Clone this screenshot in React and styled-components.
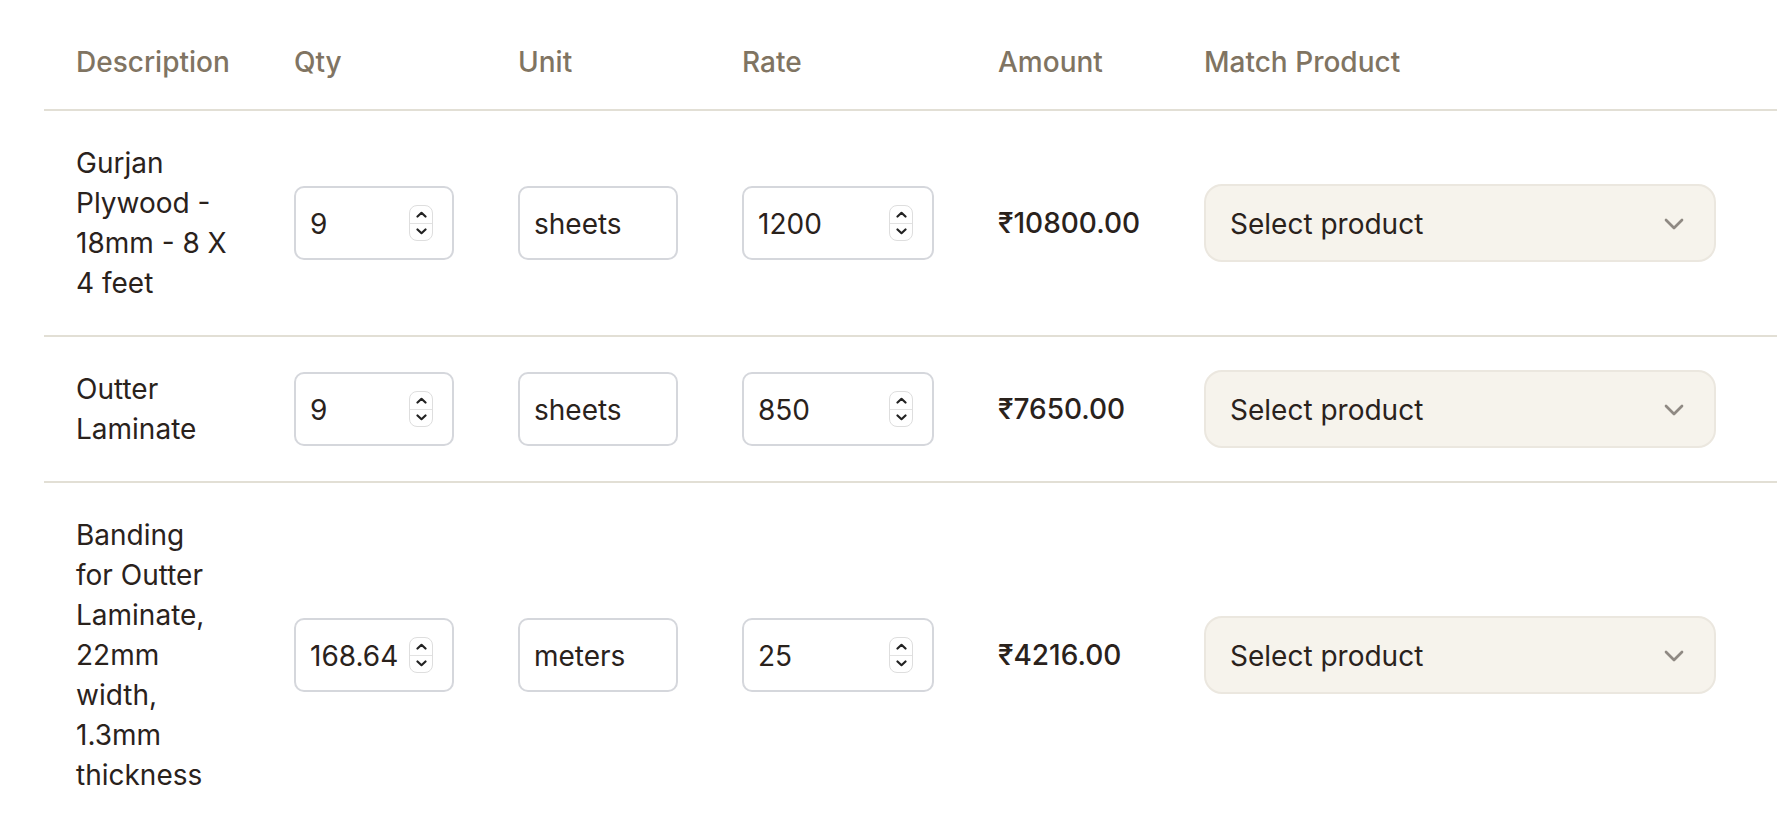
import React from "react";
import styled, { createGlobalStyle } from "styled-components";
import { ChevronDown } from "lucide-react";

const Global = createGlobalStyle`
  html, body { margin: 0; padding: 0; background: #ffffff; }
  body { font-family: Inter, "Noto Sans", sans-serif; color: #2a221c; }
  * { box-sizing: border-box; }
`;

const Page = styled.div`
  padding: 14px 7px 0 44px;
`;

const Table = styled.table`
  width: 1733px;
  border-collapse: collapse;
  table-layout: fixed;
  font-size: 28px;
  line-height: 40px;
`;

const HeadRow = styled.tr`
  border-bottom: 2px solid #e2dfd5;
`;

const Th = styled.th`
  height: 96px;
  padding: 0 32px;
  text-align: left;
  font-weight: 500;
  color: #807462;
  vertical-align: middle;
  white-space: nowrap;
`;

const Row = styled.tr`
  border-bottom: 2px solid #e2dfd5;
  &:last-child { border-bottom: none; }
`;

const Td = styled.td`
  padding: 32px;
  vertical-align: middle;
  color: #2a221c;
  font-weight: ${(p) => (p.$strong ? 500 : 400)};
`;

const DescTd = styled(Td)`
  padding-right: 35px;
`;

const Field = styled.div`
  width: ${(p) => p.$w}px;
  height: 74px;
  border: 2px solid #d5d7dc;
  border-radius: 10px;
  display: flex;
  align-items: center;
  padding: 2px 19px 0 14px;
  background: #fff;
`;

const FieldInput = styled.input`
  flex: 1;
  min-width: 0;
  border: none;
  outline: none;
  background: transparent;
  font: inherit;
  font-size: 28px;
  color: #2a221c;
  padding: 0;
`;

const Spinner = styled.div`
  flex: none;
  width: 24px;
  height: 36px;
  margin-top: -2px;
  border: 1.5px solid #dedede;
  border-radius: 8px;
  display: flex;
  flex-direction: column;
  background: #fff;
  overflow: hidden;
`;

const SpinHalf = styled.div`
  flex: 1;
  display: flex;
  align-items: center;
  justify-content: center;
  border-top: ${(p) => (p.$bottom ? "1.5px solid #e2e2e2" : "none")};
`;

const SelectButton = styled.button`
  width: 512px;
  height: 78px;
  background: #f6f3ec;
  border: 2px solid #ebe7df;
  border-radius: 18px;
  padding: 2px 24px 0;
  display: flex;
  align-items: center;
  justify-content: space-between;
  font-family: inherit;
  font-size: 28px;
  color: #2a221c;
  cursor: pointer;
`;

const Chevron = styled(ChevronDown)`
  opacity: 0.5;
  color: #2a221c;
`;

function SpinButtons() {
  return (
    <Spinner>
      <SpinHalf>
        <svg width="11" height="7" viewBox="0 0 11 7">
          <path d="M1.5 5.5 L5.5 1.8 L9.5 5.5" fill="none" stroke="#222" strokeWidth="2.2" strokeLinecap="round" strokeLinejoin="round" />
        </svg>
      </SpinHalf>
      <SpinHalf $bottom>
        <svg width="11" height="7" viewBox="0 0 11 7">
          <path d="M1.5 1.5 L5.5 5.2 L9.5 1.5" fill="none" stroke="#222" strokeWidth="2.2" strokeLinecap="round" strokeLinejoin="round" />
        </svg>
      </SpinHalf>
    </Spinner>
  );
}

function NumberField({ value, width }) {
  return (
    <Field $w={width}>
      <FieldInput type="text" inputMode="decimal" defaultValue={value} />
      <SpinButtons />
    </Field>
  );
}

function TextField({ value, width }) {
  return (
    <Field $w={width}>
      <FieldInput type="text" defaultValue={value} />
    </Field>
  );
}

const rows = [
  { desc: "Gurjan Plywood - 18mm - 8 X 4 feet", qty: "9", unit: "sheets", rate: "1200", amount: "₹10800.00" },
  { desc: "Outter Laminate", qty: "9", unit: "sheets", rate: "850", amount: "₹7650.00" },
  { desc: "Banding for Outter Laminate, 22mm width, 1.3mm thickness", qty: "168.64", unit: "meters", rate: "25", amount: "₹4216.00" },
];

export default function App() {
  return (
    <Page>
      <Global />
      <Table>
        <colgroup>
          <col style={{ width: 218 }} />
          <col style={{ width: 224 }} />
          <col style={{ width: 224 }} />
          <col style={{ width: 256 }} />
          <col style={{ width: 206 }} />
          <col />
        </colgroup>
        <thead>
          <HeadRow>
            <Th>Description</Th>
            <Th>Qty</Th>
            <Th>Unit</Th>
            <Th>Rate</Th>
            <Th>Amount</Th>
            <Th>Match Product</Th>
          </HeadRow>
        </thead>
        <tbody>
          {rows.map((r, i) => (
            <Row key={i}>
              <DescTd>{r.desc}</DescTd>
              <Td><NumberField value={r.qty} width={160} /></Td>
              <Td><TextField value={r.unit} width={160} /></Td>
              <Td><NumberField value={r.rate} width={192} /></Td>
              <Td $strong>{r.amount}</Td>
              <Td>
                <SelectButton type="button">
                  <span>Select product</span>
                  <Chevron size={32} strokeWidth={2} />
                </SelectButton>
              </Td>
            </Row>
          ))}
        </tbody>
      </Table>
    </Page>
  );
}
